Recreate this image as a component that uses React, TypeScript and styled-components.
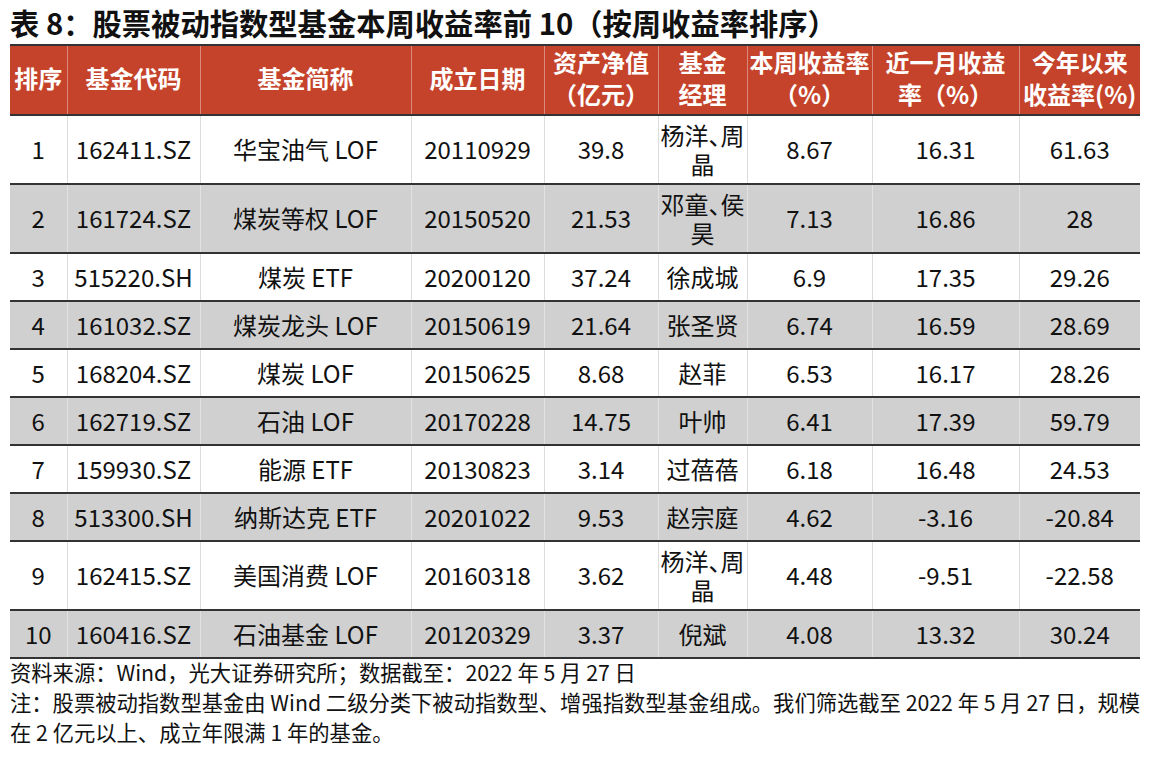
import styled, { createGlobalStyle } from "styled-components"

const GlobalStyle = createGlobalStyle`
    body {
        margin: 0;
        background: #fff;
        font-family: "Noto Sans CJK SC", "Noto Sans", sans-serif;
        color: #111;
    }
`

const columns = [57, 133, 211, 133, 114, 89, 125, 147, 121]

const headers = [
    "排序",
    "基金代码",
    "基金简称",
    "成立日期",
    "资产净值\n（亿元）",
    "基金\n经理",
    "本周收益率\n（%）",
    "近一月收益\n率（%）",
    "今年以来\n收益率(%)",
]

const App = () => {
    return (
        <Page>
            <GlobalStyle />
            <Title>表 8：股票被动指数型基金本周收益率前 10（按周收益率排序）</Title>

            <Table>
                <colgroup>
                    {columns.map((w, i) => (
                        <col key={i} style={{ width: w }} />
                    ))}
                </colgroup>
                <thead>
                    <tr>
                        {headers.map((h) => (
                            <HeadCell key={h}>{h}</HeadCell>
                        ))}
                    </tr>
                </thead>
                <tbody>
                    {data.map((row, i) => (
                        <FundRow key={row.code} row={row} rank={i + 1} shaded={i % 2 === 1} />
                    ))}
                </tbody>
            </Table>

            <Notes>
                <p>资料来源：Wind，光大证券研究所；数据截至：2022 年 5 月 27 日</p>
                <p>注：股票被动指数型基金由 Wind 二级分类下被动指数型、增强指数型基金组成。我们筛选截至 2022 年 5 月 27 日，规模</p>
                <p>在 2 亿元以上、成立年限满 1 年的基金。</p>
            </Notes>
        </Page>
    )
}

export default App




const FundRow = ({ row, rank, shaded }: any) => {
    const tall = row.manager.includes("\n")
    const cells = [rank, row.code, row.name, row.date, row.nav, row.manager, row.week, row.month, row.ytd]
    return (
        <tr>
            {cells.map((c, i) => (
                <Cell key={i} $shaded={shaded} $tall={tall}>
                    {c}
                </Cell>
            ))}
        </tr>
    )
}


const Page = styled.div`
    width: 1130px;
    padding-left: 10px;
`

const Title = styled.h1`
    margin: 0;
    font-size: 29.3px;
    font-weight: 700;
    line-height: 44px;
    white-space: nowrap;
    color: #111;
`

const Table = styled.table`
    width: 1130px;
    table-layout: fixed;
    border-collapse: collapse;
    border-top: 2px solid #333;
    border-bottom: 2px solid #333;
`

const HeadCell = styled.th`
    height: 63px;
    padding: 0 0 4px;
    background: #c5432a;
    color: #fff;
    font-size: 24px;
    font-weight: 700;
    line-height: 32px;
    white-space: pre-line;
    text-align: center;
    vertical-align: middle;
    border-bottom: 2px solid #333;
    border-left: 1px solid #d98a7c;

    &:first-child {
        border-left: none;
    }
`

const Cell = styled.td<{ $shaded: boolean; $tall: boolean }>`
    height: ${(p) => (p.$tall ? 65 : 44)}px;
    padding: 0 0 2px;
    background: ${(p) => (p.$shaded ? "#d0d0d0" : "#fff")};
    font-size: 24px;
    line-height: 29px;
    white-space: pre-line;
    text-align: center;
    vertical-align: middle;
    border-bottom: 2px solid #333;
    border-left: 1px solid ${(p) => (p.$shaded ? "#e2e2e2" : "#dcdcdc")};
    font-feature-settings: "halt";

    &:first-child {
        border-left: none;
    }
`

const Notes = styled.div`
    font-size: 21.3px;
    line-height: 30px;
    color: #111;
    margin-top: -2px;

    p {
        margin: 0;
        white-space: nowrap;
    }
`

const data = [
    { code: "162411.SZ", name: "华宝油气 LOF", date: "20110929", nav: "39.8", manager: "杨洋、周\n晶", week: "8.67", month: "16.31", ytd: "61.63" },
    { code: "161724.SZ", name: "煤炭等权 LOF", date: "20150520", nav: "21.53", manager: "邓童、侯\n昊", week: "7.13", month: "16.86", ytd: "28" },
    { code: "515220.SH", name: "煤炭 ETF", date: "20200120", nav: "37.24", manager: "徐成城", week: "6.9", month: "17.35", ytd: "29.26" },
    { code: "161032.SZ", name: "煤炭龙头 LOF", date: "20150619", nav: "21.64", manager: "张圣贤", week: "6.74", month: "16.59", ytd: "28.69" },
    { code: "168204.SZ", name: "煤炭 LOF", date: "20150625", nav: "8.68", manager: "赵菲", week: "6.53", month: "16.17", ytd: "28.26" },
    { code: "162719.SZ", name: "石油 LOF", date: "20170228", nav: "14.75", manager: "叶帅", week: "6.41", month: "17.39", ytd: "59.79" },
    { code: "159930.SZ", name: "能源 ETF", date: "20130823", nav: "3.14", manager: "过蓓蓓", week: "6.18", month: "16.48", ytd: "24.53" },
    { code: "513300.SH", name: "纳斯达克 ETF", date: "20201022", nav: "9.53", manager: "赵宗庭", week: "4.62", month: "-3.16", ytd: "-20.84" },
    { code: "162415.SZ", name: "美国消费 LOF", date: "20160318", nav: "3.62", manager: "杨洋、周\n晶", week: "4.48", month: "-9.51", ytd: "-22.58" },
    { code: "160416.SZ", name: "石油基金 LOF", date: "20120329", nav: "3.37", manager: "倪斌", week: "4.08", month: "13.32", ytd: "30.24" },
]
